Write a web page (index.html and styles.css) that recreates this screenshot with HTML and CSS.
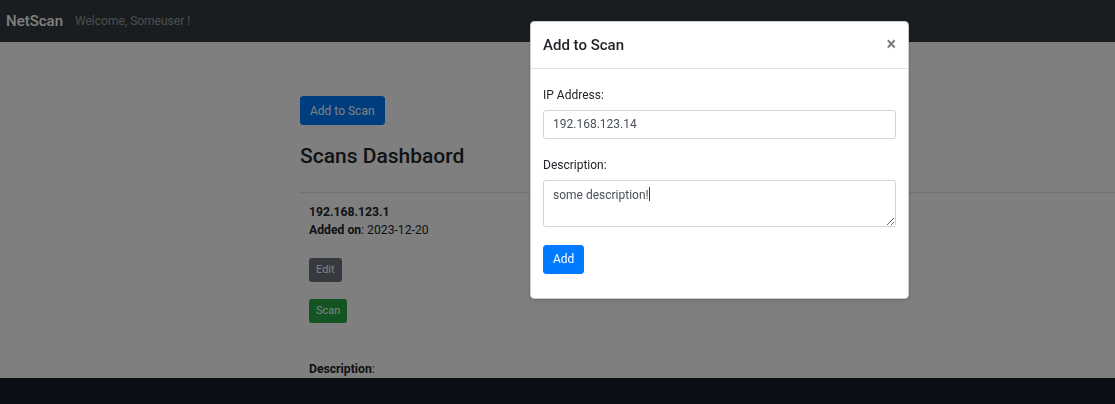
FILE: index.html
```html
<!DOCTYPE html>
<html lang="en">
<head>
<meta charset="utf-8">
<title>NetScan</title>
<link rel="stylesheet" href="styles.css">
</head>
<body class="modal-open">
  <nav class="navbar">
    <span class="brand">NetScan</span>
    <span class="welcome">Welcome, Someuser !</span>
  </nav>

  <main class="container">
    <button class="btn btn-primary">Add to Scan</button>
    <h3 class="title">Scans Dashbaord</h3>
    <div class="scan-item">
      <div class="ip">192.168.123.1</div>
      <div><strong>Added on</strong>: 2023-12-20</div>
      <div class="actions">
        <button class="btn btn-sm btn-secondary">Edit</button>
        <button class="btn btn-sm btn-success">Scan</button>
      </div>
      <div class="desc"><strong>Description</strong>:</div>
    </div>
  </main>

  <footer class="footer"></footer>

  <div class="backdrop"></div>

  <div class="modal">
    <div class="modal-header">
      <h5 class="modal-title">Add to Scan</h5>
      <button class="close" aria-label="Close">×</button>
    </div>
    <form class="modal-body">
      <div class="form-group">
        <label class="label" for="ip">IP Address:</label>
        <input class="form-control" id="ip" type="text" value="192.168.123.14">
      </div>
      <div class="form-group">
        <label class="label" for="desc">Description:</label>
        <div class="textarea-wrap">
          <textarea class="form-control textarea" id="desc" rows="2">some description!</textarea>
          <span class="caret"></span>
        </div>
      </div>
      <button class="btn btn-primary" type="button">Add</button>
    </form>
  </div>
</body>
</html>
```

FILE: styles.css
```css
* { box-sizing: border-box; }

html, body {
  margin: 0;
  height: 100%;
}

body {
  font-family: Roboto, "Liberation Sans", Arial, sans-serif;
  font-size: 12px;
  line-height: 1.5;
  color: #212529;
  background: #fff;
}

.modal-open { overflow: hidden; }

/* Navbar */
.navbar {
  height: 42px;
  background: #343a40;
  display: flex;
  align-items: center;
  padding: 0 6px;
}
.brand {
  font-size: 15px;
  font-weight: 500;
  color: #fff;
  margin-right: 12px;
}
.welcome {
  color: rgba(255, 255, 255, 0.5);
  font-size: 12px;
}

/* Buttons */
.btn {
  display: inline-block;
  font-family: inherit;
  font-size: 12px;
  line-height: 18px;
  padding: 4.5px 9px;
  border: 1px solid transparent;
  border-radius: 3px;
  color: #fff;
  cursor: pointer;
}
.btn-primary { background: #007bff; border-color: #007bff; }
.btn-secondary { background: #6c757d; border-color: #6c757d; }
.btn-success { background: #28a745; border-color: #28a745; }
.btn-sm {
  font-size: 11px;
  line-height: 16px;
  padding: 3px 6px;
  border-radius: 2.5px;
}

/* Main */
.container {
  margin-left: 300px;
  padding-top: 54px;
}
.title {
  font-size: 21px;
  font-weight: 500;
  line-height: 1.2;
  margin: 19px 0 0;
}
.scan-item {
  margin-top: 23px;
  border-top: 1px solid rgba(0, 0, 0, 0.1);
  padding: 10px 9px;
  font-size: 12.2px;
}
.ip { font-weight: 700; }
.actions {
  display: flex;
  flex-direction: column;
  align-items: flex-start;
  gap: 17px;
  margin-top: 18px;
}
.desc { margin-top: 37px; }

.footer {
  position: fixed;
  left: 0;
  right: 0;
  bottom: 0;
  height: 26px;
  background: #181e2c;
}

/* Modal */
.backdrop {
  position: fixed;
  inset: 0;
  background: rgba(0, 0, 0, 0.5);
}
.modal {
  position: absolute;
  top: 21px;
  left: 530px;
  width: 379px;
  background: #fff;
  border: 1px solid rgba(0, 0, 0, 0.2);
  border-radius: 4.5px;
  box-shadow: 0 1px 3px rgba(0, 0, 0, 0.2);
}
.modal-header {
  display: flex;
  align-items: flex-start;
  padding: 12px 12px 11px;
  border-bottom: 1px solid #dee2e6;
}
.modal-title {
  margin: 0;
  font-size: 15px;
  font-weight: 500;
  line-height: 22.5px;
}
.close {
  margin-left: auto;
  margin-top: 1px;
  background: none;
  border: 0;
  padding: 0;
  font-family: inherit;
  font-size: 18px;
  font-weight: 700;
  line-height: 1;
  color: #000;
  opacity: 0.5;
  text-shadow: 0 1px 0 #fff;
}
.modal-body {
  padding: 17px 12px 24px;
  margin: 0;
}
.form-group { margin-bottom: 17.5px; }
.label {
  display: block;
  margin-bottom: 6px;
}
.form-control {
  display: block;
  width: 100%;
  height: 29px;
  padding: 4.5px 9px;
  font-family: inherit;
  font-size: 12px;
  line-height: 18px;
  color: #495057;
  background: #fff;
  border: 1px solid #ced4da;
  border-radius: 3px;
}
.textarea-wrap { position: relative; }
.textarea {
  height: 47px;
  resize: vertical;
}
.caret {
  position: absolute;
  left: 106px;
  top: 7px;
  width: 1px;
  height: 14px;
  background: #333;
}
```
